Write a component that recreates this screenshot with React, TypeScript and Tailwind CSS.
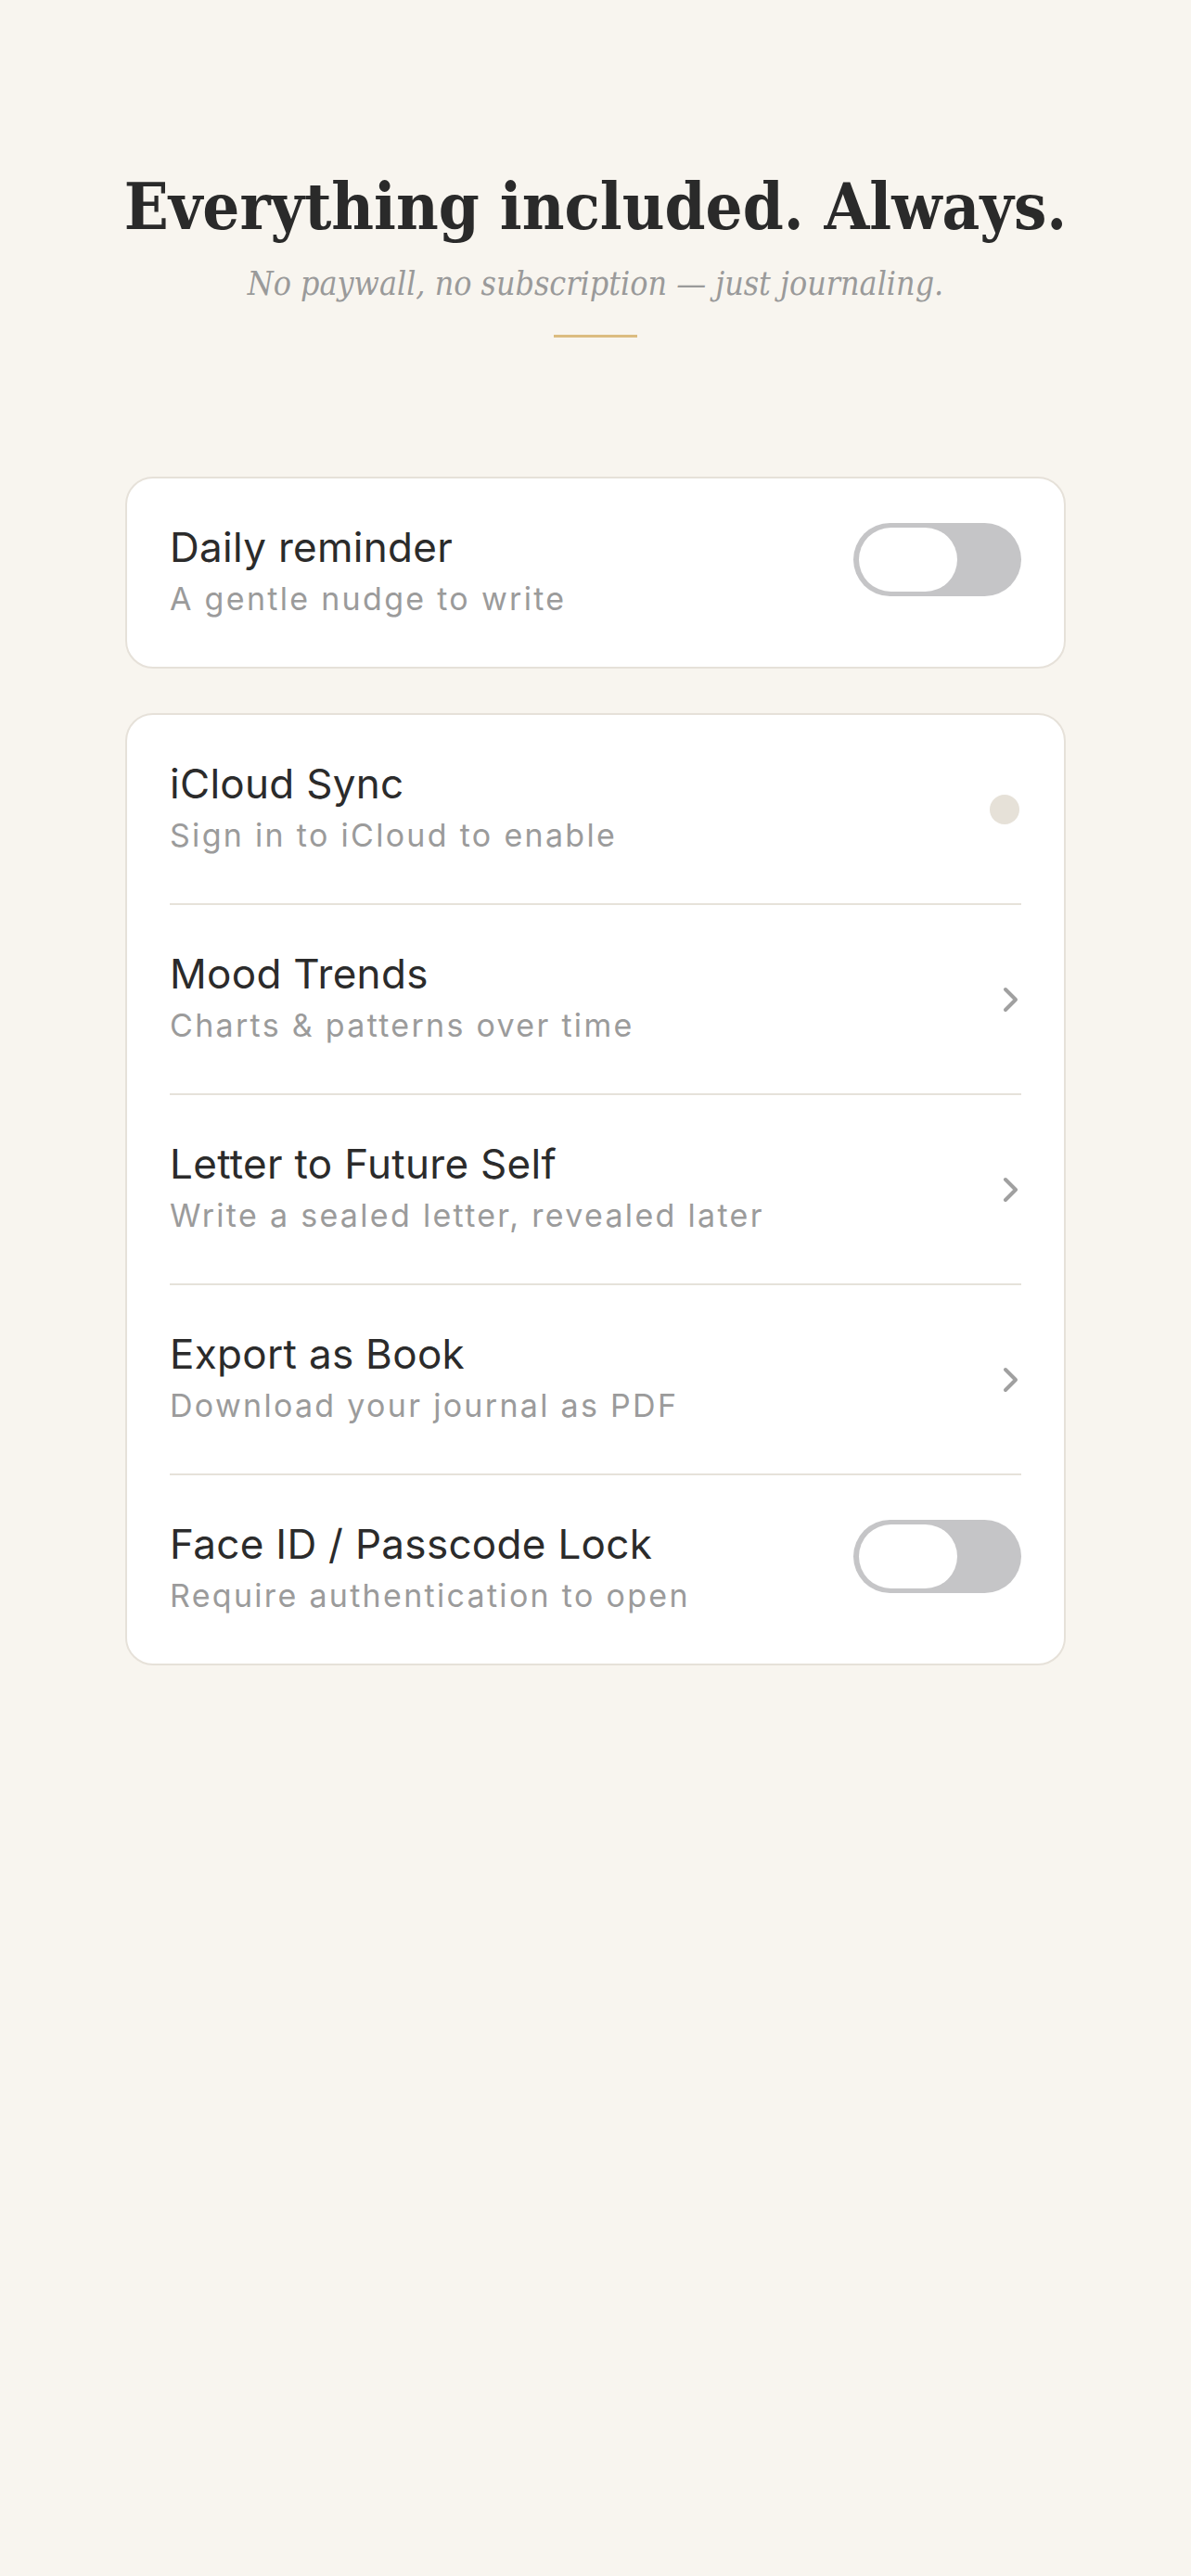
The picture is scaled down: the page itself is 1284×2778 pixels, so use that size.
import React from "react";

function Toggle() {
  return (
    <div className="mb-[29px] flex h-[79px] w-[181px] shrink-0 items-center rounded-full bg-[#c5c5c7] pl-[6px]">
      <div className="h-[69px] w-[106px] rounded-full bg-white" />
    </div>
  );
}

function Chevron() {
  return (
    <svg width="18" height="28" viewBox="0 0 18 28" className="mr-[2px] shrink-0">
      <path d="M3 3 L14 14 L3 25" fill="none" stroke="#a0a0a0" strokeWidth="4" strokeLinecap="round" strokeLinejoin="round" />
    </svg>
  );
}

function Dot() {
  return <div className="mr-[2px] h-[32px] w-[32px] shrink-0 rounded-full bg-[#e6e1d8]" />;
}

function Row({ title, sub, right }: { title: string; sub: string; right: React.ReactNode }) {
  return (
    <div className="flex h-[203px] items-center justify-between">
      <div className="flex flex-col">
        <div className="text-[44px] leading-[56px] tracking-[0.3px] text-[#2b2b2b]">{title}</div>
        <div className="text-[34px] leading-[56px] tracking-[2.3px] text-[#9b9b9b]">{sub}</div>
      </div>
      {right}
    </div>
  );
}

function Divider() {
  return <div className="h-[2px] bg-[#e6e2da]" />;
}

export default function App() {
  return (
    <div
      className="min-h-[2778px] w-full bg-[#f8f5ef] px-[135px]"
      style={{ fontFamily: "Inter, 'Noto Sans', sans-serif" }}
    >
      <div className="flex flex-col items-center pt-[181px]">
        <h1
          className="whitespace-nowrap text-[70px] font-bold leading-[84px] text-[#2a2a2a]"
          style={{ fontFamily: "'DejaVu Serif Condensed', 'DejaVu Serif', serif" }}
        >
          Everything included. Always.
        </h1>
        <p
          className="mt-[19px] whitespace-nowrap text-[35.5px] italic leading-[44px] text-[#9a9a9a]"
          style={{ fontFamily: "'DejaVu Serif Condensed', 'DejaVu Serif', serif" }}
        >
          No paywall, no subscription — just journaling.
        </p>
        <div className="mt-[33px] h-[3px] w-[90px] bg-[#dcbc80]" />
      </div>

      <div className="mt-[150px] flex flex-col gap-[48px]">
        <div className="rounded-[30px] border-2 border-[#e6e1d9] bg-white px-[46px]">
          <Row title="Daily reminder" sub="A gentle nudge to write" right={<Toggle />} />
        </div>

        <div className="rounded-[30px] border-2 border-[#e6e1d9] bg-white px-[46px]">
          <Row title="iCloud Sync" sub="Sign in to iCloud to enable" right={<Dot />} />
          <Divider />
          <Row title="Mood Trends" sub="Charts & patterns over time" right={<Chevron />} />
          <Divider />
          <Row title="Letter to Future Self" sub="Write a sealed letter, revealed later" right={<Chevron />} />
          <Divider />
          <Row title="Export as Book" sub="Download your journal as PDF" right={<Chevron />} />
          <Divider />
          <Row title="Face ID / Passcode Lock" sub="Require authentication to open" right={<Toggle />} />
        </div>
      </div>
    </div>
  );
}
